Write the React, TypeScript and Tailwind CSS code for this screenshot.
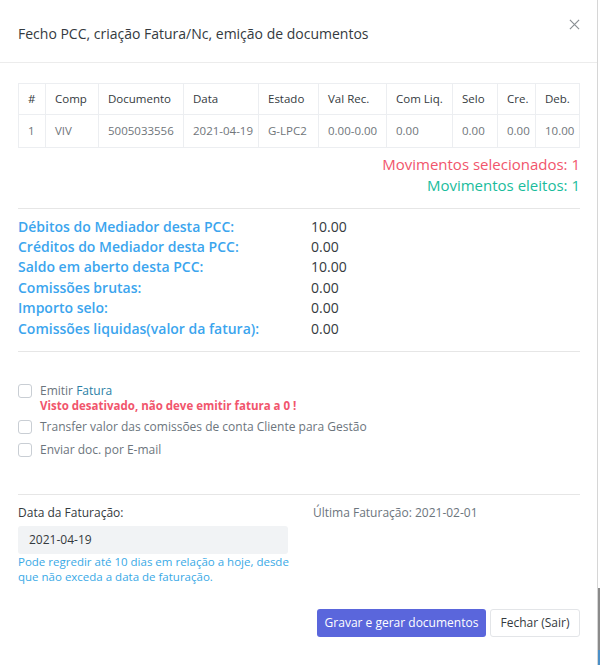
import React from "react";

const cols = [
  { h: "#", v: "1", w: "w-[27px]" },
  { h: "Comp", v: "VIV", w: "w-[53px]" },
  { h: "Documento", v: "5005033556", w: "w-[85px]" },
  { h: "Data", v: "2021-04-19", w: "w-[75px]" },
  { h: "Estado", v: "G-LPC2", w: "w-[60px]" },
  { h: "Val Rec.", v: "0.00-0.00", w: "w-[68px]" },
  { h: "Com Liq.", v: "0.00", w: "w-[66px]" },
  { h: "Selo", v: "0.00", w: "w-[45px]" },
  { h: "Cre.", v: "0.00", w: "w-[38px]" },
  { h: "Deb.", v: "10.00", w: "flex-1" },
];

const rows: [string, string][] = [
  ["Débitos do Mediador desta PCC:", "10.00"],
  ["Créditos do Mediador desta PCC:", "0.00"],
  ["Saldo em aberto desta PCC:", "10.00"],
  ["Comissões brutas:", "0.00"],
  ["Importo selo:", "0.00"],
  ["Comissões liquidas(valor da fatura):", "0.00"],
];

function Box() {
  return <span className="block w-[14px] h-[14px] rounded-[3px] border border-[#c9ced4] bg-white shrink-0" />;
}

export default function App() {
  return (
    <div className="flex w-[602px] h-[665px] bg-white" style={{ fontFamily: "'Open Sans', 'Liberation Sans', sans-serif" }}>
      <div className="w-[598px] border-r border-[#d6d6d6] flex flex-col">
        {/* header */}
        <div className="h-[63px] border-b border-[#ececec] flex items-start justify-between pl-[18px] pr-[17px]">
          <div className="mt-[25px] text-[14px] leading-[18px] text-[#343a40]">Fecho PCC, criação Fatura/Nc, emição de documentos</div>
          <div className="mt-[19px] text-[#8a8f94]">
            <svg width="11" height="11" viewBox="0 0 12 12" fill="none" stroke="currentColor" strokeWidth="1.3">
              <path d="M1 1 L11 11 M11 1 L1 11" />
            </svg>
          </div>
        </div>

        <div className="pl-[18px] pr-[17px] pt-[20px]">
          {/* table */}
          <div className="border border-[#eceef1] flex flex-col">
            <div className="flex h-[31px] border-b border-[#eceef1]">
              {cols.map((c, i) => (
                <div key={i} className={`${c.w} ${i < cols.length - 1 ? "border-r border-[#eceef1]" : ""} flex items-center pl-[9px] text-[11.5px] text-[#343a40] whitespace-nowrap`}>{c.h}</div>
              ))}
            </div>
            <div className="flex h-[32px]">
              {cols.map((c, i) => (
                <div key={i} className={`${c.w} ${i < cols.length - 1 ? "border-r border-[#eceef1]" : ""} flex items-center pl-[9px] text-[11.5px] text-[#70757a] whitespace-nowrap`}>{c.v}</div>
              ))}
            </div>
          </div>

          <div className="mt-[6px] flex flex-col items-end text-[15px] leading-[21px]">
            <div className="text-[#f1556c]">Movimentos selecionados: 1</div>
            <div className="text-[#1abc9c]">Movimentos eleitos: 1</div>
          </div>

          <div className="mt-[12px] border-t border-[#e6e6e6]" />

          <div className="pt-[7px] pb-[13px] flex flex-col">
            {rows.map(([l, v], i) => (
              <div key={i} className="flex h-[20.4px] items-center text-[14px]">
                <span className="w-[293px] text-[#3ba5ee] font-semibold">{l}</span>
                <span className="text-[#343a40]">{v}</span>
              </div>
            ))}
          </div>

          <div className="border-t border-[#e6e6e6]" />

          <div className="pt-[31px] flex flex-col">
            <div className="flex items-start gap-[8px]">
              <div className="mt-[1px]"><Box /></div>
              <div className="flex flex-col">
                <span className="text-[12px] leading-[15px] text-[#6c757d]">Emitir <span className="text-[#2b7fa6]">Fatura</span></span>
                <span className="text-[11.5px] leading-[15px] font-bold text-[#f1556c]">Visto desativado, não deve emitir fatura a 0 !</span>
              </div>
            </div>
            <div className="flex items-center gap-[8px] mt-[6px]">
              <Box />
              <span className="text-[12px] leading-[16px] text-[#6c757d]">Transfer valor das comissões de conta Cliente para Gestão</span>
            </div>
            <div className="flex items-center gap-[8px] mt-[7px]">
              <Box />
              <span className="text-[12px] leading-[16px] text-[#6c757d]">Enviar doc. por E-mail</span>
            </div>
          </div>

          <div className="mt-[36px] border-t border-[#e6e6e6]" />

          <div className="flex pt-[10px]">
            <div className="w-[295px] flex flex-col">
              <span className="text-[12px] leading-[16px] text-[#343a40]">Data da Faturação:</span>
              <div className="mt-[5px] w-[270px] h-[28px] rounded-[3px] bg-[#f1f3f5] flex items-center pl-[11px] text-[12px] text-[#343a40]">2021-04-19</div>
              <div className="text-[11.5px] leading-[15px] text-[#39a9e6] w-[275px]">Pode regredir até 10 dias em relação a hoje, desde que não exceda a data de faturação.</div>
            </div>
            <span className="text-[12px] leading-[16px] text-[#6c757d]">Última Faturação: 2021-02-01</span>
          </div>

          <div className="mt-[25px] flex justify-end gap-[4px]">
            <button className="h-[28px] w-[169px] rounded-[3px] bg-[#5a66dc] text-white text-[12px]">Gravar e gerar documentos</button>
            <button className="h-[28px] w-[90px] rounded-[3px] border border-[#e3e5e8] bg-white text-[#343a40] text-[12px]">Fechar (Sair)</button>
          </div>
        </div>
      </div>
      <div className="flex-1 flex flex-col">
        <div className="h-[588px]" />
        <div className="h-[62px] bg-[#8a8a8a] w-[2px]" />
        <div className="flex-1 bg-[#4b8fc7] w-[2px]" />
      </div>
    </div>
  );
}
